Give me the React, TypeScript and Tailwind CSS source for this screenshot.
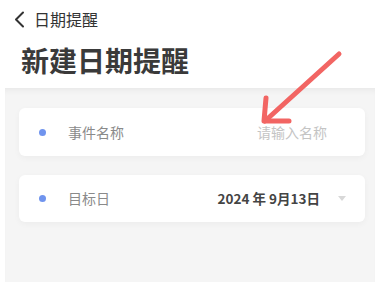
import React from "react";

export default function App() {
  return (
    <div
      className="relative w-[375px] h-[282px] overflow-hidden bg-white"
      style={{ fontFamily: '"Noto Sans CJK SC", "Noto Sans", sans-serif' }}
    >
      <div className="flex items-center h-[38px] pl-[13px] gap-[8px] text-[#333]">
        <svg width="13" height="17" viewBox="0 0 13 17" fill="none">
          <path d="M10 1.5 L3 8.5 L10 15.5" stroke="#333" strokeWidth="2" strokeLinecap="round" strokeLinejoin="round" />
        </svg>
        <span className="text-[16px] leading-none">日期提醒</span>
      </div>
      <div className="h-[44px] pl-[21px] text-[28px] leading-[44px] font-bold text-[#3a3a3a]">新建日期提醒</div>
      <div className="mt-[6px] ml-[5px] h-[200px] bg-[#f5f5f5] shadow-[inset_0_6px_6px_-4px_rgba(0,0,0,0.06)] pt-[20px] pl-[14px] pr-[10px] flex flex-col gap-[19px]">
        <div className="h-[48px] bg-white rounded-[6px] shadow-[0_2px_6px_rgba(0,0,0,0.04)] flex items-center pl-[20px] pr-[38px]">
          <span className="w-[7px] h-[7px] rounded-full bg-[#7094ee]" />
          <span className="ml-[22px] text-[14px] text-[#8a8a8a]">事件名称</span>
          <span className="ml-auto text-[14px] text-[#c4c4c4]">请输入名称</span>
        </div>
        <div className="h-[47px] bg-white rounded-[6px] shadow-[0_2px_6px_rgba(0,0,0,0.04)] flex items-center pl-[20px] pr-[19px]">
          <span className="w-[7px] h-[7px] rounded-full bg-[#7094ee]" />
          <span className="ml-[22px] text-[14px] text-[#8a8a8a]">目标日</span>
          <span className="ml-auto text-[13.5px] font-bold text-[#444]">2024 年 9月13日</span>
          <svg className="ml-[18px]" width="8" height="5" viewBox="0 0 8 5">
            <path d="M0 0 L8 0 L4 5 Z" fill="#d8d8d8" />
          </svg>
        </div>
      </div>
      <svg className="absolute left-0 top-0 pointer-events-none" width="375" height="282" viewBox="0 0 375 282">
        <g stroke="#f26563" strokeWidth="5" strokeLinecap="round" strokeLinejoin="round" fill="none">
          <path d="M339 54 L265 121" />
          <path d="M266 98 L264 121 L289 121" />
        </g>
      </svg>
    </div>
  );
}
